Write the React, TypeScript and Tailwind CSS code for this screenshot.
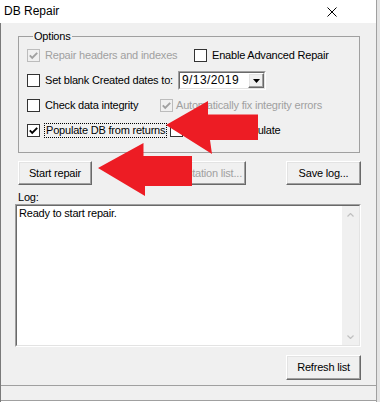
import type { ReactNode } from "react";
import clsx from "clsx";

const raised =
  "border border-t-white border-l-white border-b-[#696969] border-r-[#696969] shadow-[inset_-1px_-1px_#a0a0a0,inset_1px_1px_#e3e3e3] bg-[#f0f0f0]";

function Check({ checked, disabled }: { checked?: boolean; disabled?: boolean }) {
  return (
    <span
      className={clsx(
        "flex h-[13px] w-[13px] shrink-0 items-center justify-center border",
        disabled ? "border-[#bcbcbc] bg-[#f0f0f0]" : "border-[#333333] bg-white"
      )}
    >
      {checked ? (
        <svg width="11" height="11" viewBox="0 0 11 11">
          <path d="M1.8 5.4 L4.2 7.8 L9.2 2.8" stroke={disabled ? "#a0a0a0" : "#000"} strokeWidth="1.9" fill="none" />
        </svg>
      ) : null}
    </span>
  );
}

function Btn({ children, className, disabled }: { children: ReactNode; className?: string; disabled?: boolean }) {
  return (
    <div className={clsx("flex shrink-0 items-center justify-center", raised, disabled ? "text-[#a0a0a0]" : "text-black", className)}>
      {children}
    </div>
  );
}

function Row({ children }: { children: ReactNode }) {
  return <div className="flex h-[25px] items-center">{children}</div>;
}

export default function App() {
  return (
    <div className="relative flex h-[402px] w-[380px] overflow-hidden whitespace-nowrap bg-[#f0f0f0] font-['Liberation_Sans',Arial,sans-serif] text-[11px] leading-[13px] tracking-[-0.2px] text-black">
      <div className="flex w-[376px] flex-col">
        <div className="flex h-[23px] shrink-0 items-center justify-between bg-white pl-[4px] pr-[39px] text-[12px] tracking-normal">
          <span>DB Repair</span>
          <svg width="10" height="10" viewBox="0 0 10 10">
            <path d="M0.5 0.5 L9.5 9.5 M9.5 0.5 L0.5 9.5" stroke="#000" strokeWidth="1" />
          </svg>
        </div>

        <div className="flex flex-1 flex-col border-l border-[#7a7a7a]">
          <fieldset className="ml-[17px] mt-[7px] w-[342px] border border-[#a0a0a0] pb-[9px] pl-[8px]">
            <legend className="ml-[6px] px-[1px]">Options</legend>
            <Row>
              <div className="flex w-[167px] items-center gap-[5px]">
                <Check checked disabled />
                <span className="text-[#a0a0a0]">Repair headers and indexes</span>
              </div>
              <div className="flex items-center gap-[5px]">
                <Check />
                <span>Enable Advanced Repair</span>
              </div>
            </Row>
            <Row>
              <div className="flex w-[151px] items-center gap-[5px]">
                <Check />
                <span>Set blank Created dates to:</span>
              </div>
              <div className="flex h-[19px] w-[88px] border border-t-[#a0a0a0] border-l-[#a0a0a0] border-b-white border-r-white">
                <div className="flex flex-1 border border-t-[#696969] border-l-[#696969] border-b-[#e3e3e3] border-r-[#e3e3e3] bg-white">
                  <span className="flex-1 pl-[2px] text-[12px] leading-[15px] tracking-[0.4px]">9/13/2019</span>
                  <div className={clsx("flex w-[16px] items-center justify-center", raised)}>
                    <svg width="7" height="4" viewBox="0 0 7 4">
                      <path d="M0 0 H7 L3.5 4 Z" fill="#000" />
                    </svg>
                  </div>
                </div>
              </div>
            </Row>
            <Row>
              <div className="flex w-[133px] items-center gap-[5px]">
                <Check />
                <span>Check data integrity</span>
              </div>
              <div className="flex items-center gap-[3px]">
                <Check checked disabled />
                <span className="text-[#a0a0a0]">Automatically fix integrity errors</span>
              </div>
            </Row>
            <Row>
              <div className="flex w-[143px] items-center">
                <Check checked />
                <span className="ml-[4px] border border-dotted border-black px-[1px]">Populate DB from returns</span>
              </div>
              <div className="flex items-center gap-[10px]">
                <Check />
                <span>Always recalculate</span>
              </div>
            </Row>
          </fieldset>

          <div className="mt-[8px] flex pl-[17px]">
            <Btn className="h-[24px] w-[74px]">Start repair</Btn>
            <Btn disabled className="ml-[44px] h-[24px] w-[110px] !justify-end pr-[3px]">Rebuild station list...</Btn>
            <Btn className="ml-[40px] h-[24px] w-[75px]">Save log...</Btn>
          </div>

          <div className="mt-[6px] pl-[17px]">Log:</div>

          <div className="ml-[14px] flex h-[143px] w-[346px] border border-t-[#a0a0a0] border-l-[#a0a0a0] border-b-white border-r-white">
            <div className="flex flex-1 border border-t-[#696969] border-l-[#696969] border-b-[#e3e3e3] border-r-[#e3e3e3] bg-white">
              <div className="flex-1 pl-[2px] pt-[1px]">Ready to start repair.</div>
              <div className="flex w-[17px] flex-col justify-between bg-[#f0f0f0]">
                <div className="flex h-[17px] items-center justify-center">
                  <svg width="7" height="4" viewBox="0 0 7 4">
                    <path d="M0.5 3.5 L3.5 0.5 L6.5 3.5" stroke="#c0c0c0" strokeWidth="1.2" fill="none" />
                  </svg>
                </div>
                <div className="flex h-[17px] items-center justify-center">
                  <svg width="7" height="4" viewBox="0 0 7 4">
                    <path d="M0.5 0.5 L3.5 3.5 L6.5 0.5" stroke="#c0c0c0" strokeWidth="1.2" fill="none" />
                  </svg>
                </div>
              </div>
            </div>
          </div>

          <div className="mt-[8px] flex pl-[285px]">
            <Btn className="h-[25px] w-[75px]">Refresh list</Btn>
          </div>

          <div className="mt-auto h-[16px] border-y border-[#a0a0a0]" />
          <div className="h-[1px] bg-white" />
        </div>
      </div>
      <div className="w-[4px] border-l border-[#a0a0a0] bg-[#e4e4e4]" />

      <svg className="pointer-events-none absolute left-0 top-0" width="380" height="402" viewBox="0 0 380 402">
        <polygon points="166,125 208,101 208,114.5 258,114.5 258,140 210,140 212,154" fill="#ed1c24" />
        <polygon points="98,168 143.5,143 143.5,156 192,156 192,186 145,186 145,196" fill="#ed1c24" />
      </svg>
    </div>
  );
}
